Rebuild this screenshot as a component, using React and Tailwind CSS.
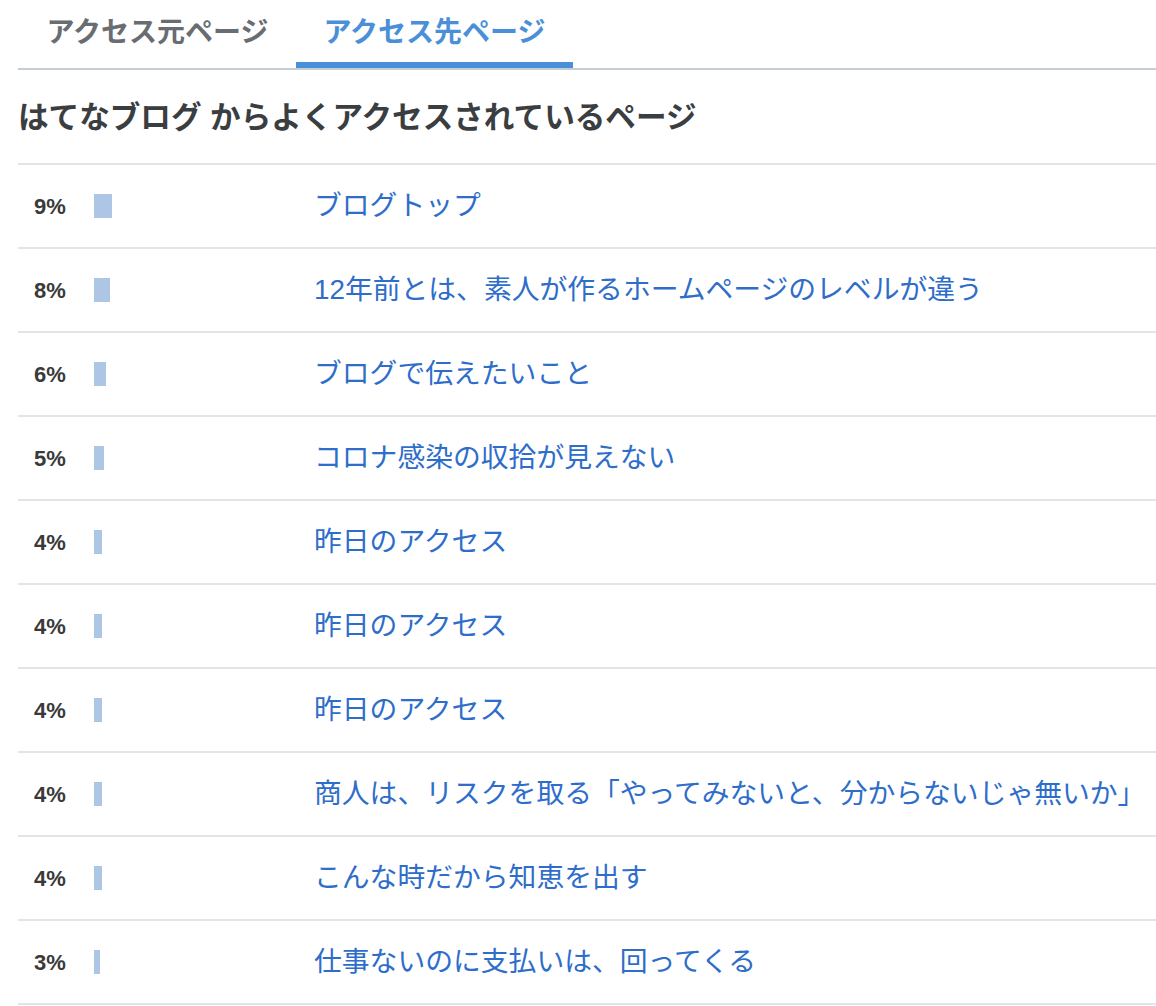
// アクセス先ページ ranking panel

const rows = [
  { pct: 9, title: 'ブログトップ' },
  { pct: 8, title: '12年前とは、素人が作るホームページのレベルが違う' },
  { pct: 6, title: 'ブログで伝えたいこと' },
  { pct: 5, title: 'コロナ感染の収拾が見えない' },
  { pct: 4, title: '昨日のアクセス' },
  { pct: 4, title: '昨日のアクセス' },
  { pct: 4, title: '昨日のアクセス' },
  { pct: 4, title: '商人は、リスクを取る「やってみないと、分からないじゃ無いか」' },
  { pct: 4, title: 'こんな時だから知恵を出す' },
  { pct: 3, title: '仕事ないのに支払いは、回ってくる' },
]

function Tab({ label, active }) {
  return (
    <div
      className={[
        'w-[277px] h-[68px] pt-[4px] flex items-center justify-center',
        'border-b-[6px] text-[28px] font-bold',
        active ? 'border-[#4a90d9] text-[#4a90d9]' : 'border-transparent text-[#696d71]',
      ].join(' ')}
    >
      {label}
    </div>
  )
}

export default function App() {
  return (
    <div className="bg-white min-h-screen pl-[18px] font-['Liberation_Sans','Noto_Sans_CJK_JP',sans-serif]">
      {/* tabs */}
      <div className="flex pl-px border-b-2 border-[#c5cdd5]">
        <Tab label="アクセス元ページ" />
        <Tab label="アクセス先ページ" active />
      </div>

      {/* heading */}
      <h2 className="h-[93px] pt-[3px] flex items-center text-[30.6px] font-bold text-[#3b3e41]">
        はてなブログ からよくアクセスされているページ
      </h2>

      {/* list */}
      <ul className="border-t-2 border-[#e1e4e8]">
        {rows.map((r, i) => (
          <li key={i} className="h-[84px] flex items-center border-b-2 border-[#e1e4e8]">
            <span className="w-[76px] pl-[16px] text-[22px] font-bold text-[#3a3a3a]">
              {r.pct}%
            </span>
            <span className="w-[220px] flex">
              <span className="h-[24px] bg-[#adc6e5]" style={{ width: r.pct * 2 }} />
            </span>
            <a href="#" className="text-[27.8px] text-[#2e6dca] whitespace-nowrap">
              {r.title}
            </a>
          </li>
        ))}
      </ul>
    </div>
  )
}
